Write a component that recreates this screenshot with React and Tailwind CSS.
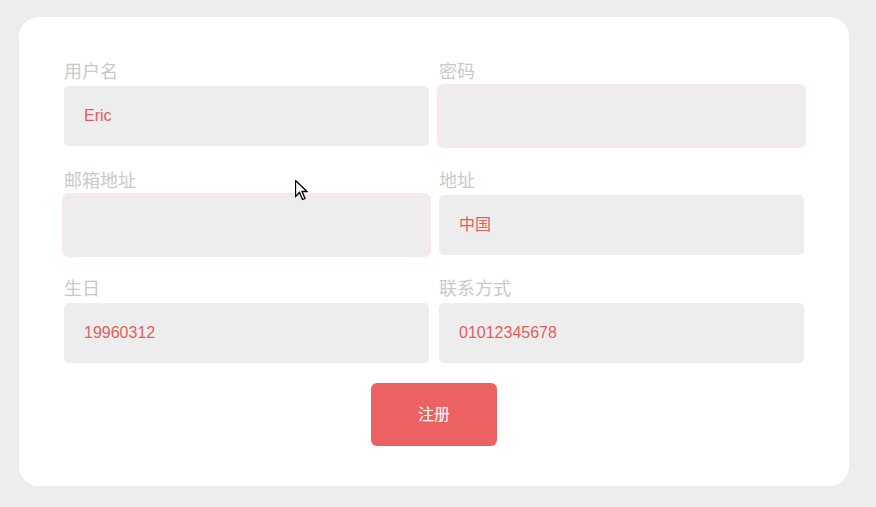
import React from "react";

const font = { fontFamily: '"Liberation Sans", "Noto Sans CJK SC", sans-serif' };

function Field({ label, value, highlight }) {
  return (
    <div className="flex flex-col">
      <div className="h-6 leading-6 text-[18px] text-[#c9c9c9] mb-[2px]">{label}</div>
      <div
        className={
          "h-[60px] rounded-[5px] bg-[#ededed] flex items-center px-5 text-[16px] text-[#e35d5d] " +
          (highlight ? "ring-2 ring-[#fbe6ec]" : "")
        }
      >
        {value}
      </div>
    </div>
  );
}

export default function App() {
  return (
    <div className="relative w-[876px] h-[507px] bg-[#ededed] pt-[17px] pl-[19px]" style={font}>
      <div className="w-[830px] h-[469px] bg-white rounded-[20px] px-[45px] pt-[43px]">
        <div className="grid grid-cols-2 gap-x-[10px] gap-y-[22.5px]">
          <Field label="用户名" value="Eric" />
          <Field label="密码" value="" highlight />
          <Field label="邮箱地址" value="" highlight />
          <Field label="地址" value="中国" />
          <Field label="生日" value="19960312" />
          <Field label="联系方式" value="01012345678" />
        </div>
        <div className="flex justify-center mt-[20px]">
          <button className="w-[126px] h-[63px] rounded-[6px] bg-[#ec6161] text-white text-[16px]">
            注册
          </button>
        </div>
      </div>
      <svg
        className="absolute left-[295px] top-[180px]"
        width="13"
        height="22"
        viewBox="0 0 13 22"
      >
        <path
          d="M0.5 0.5 L0.5 16.5 L4.5 12.5 L7.5 19.5 L10 18.5 L7 11.5 L12 11.5 Z"
          fill="white"
          stroke="black"
          strokeWidth="1.3"
          strokeLinejoin="miter"
        />
      </svg>
    </div>
  );
}
